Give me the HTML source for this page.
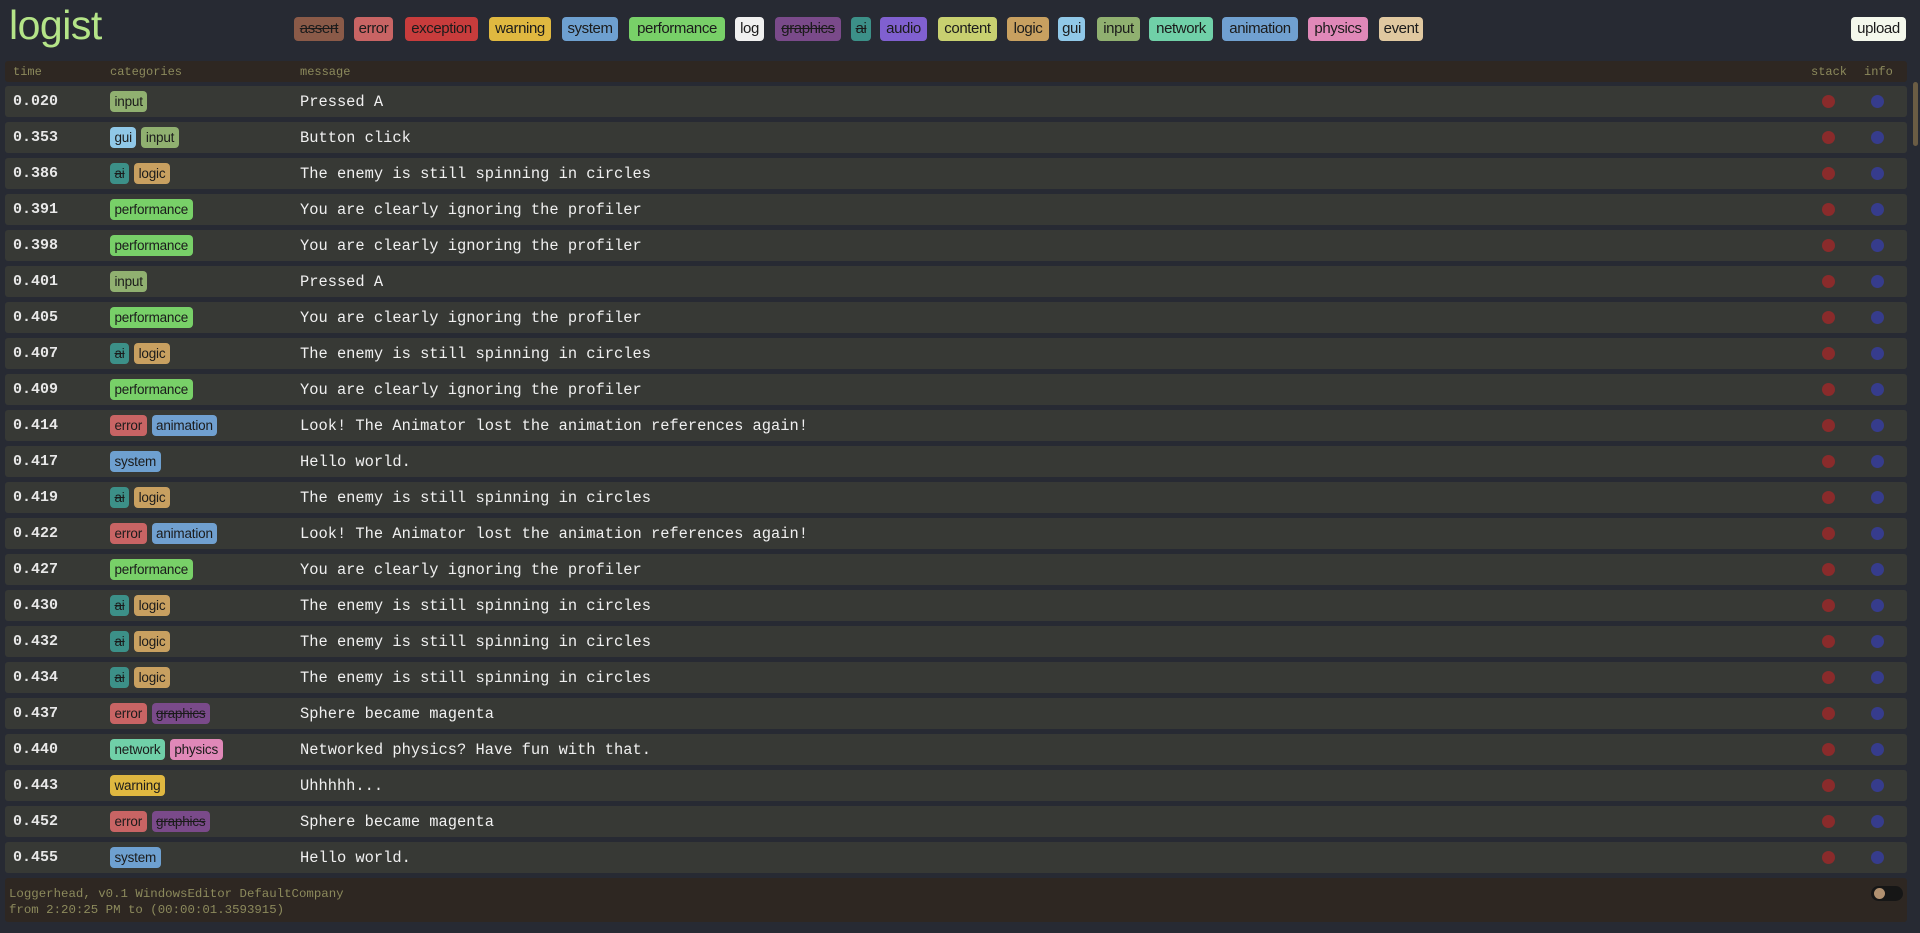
<!DOCTYPE html>
<html><head><meta charset="utf-8"><style>
*{margin:0;padding:0;box-sizing:border-box}
body{width:1920px;height:933px;background:#272a33;position:relative;overflow:hidden;font-family:"Liberation Sans",sans-serif}
.logo{position:absolute;left:9px;top:2px;font-size:41px;color:#b4e488;letter-spacing:-0.5px}
.hc{position:absolute;top:17px;height:24px;border-radius:4px;font-size:15px;line-height:24px;text-align:center;color:#1b1b1b;letter-spacing:-0.4px;white-space:nowrap}
.s{text-decoration:line-through}
.th{position:absolute;left:5px;top:61px;width:1902px;height:21px;background:#2e2722;border-radius:3px;font-family:"Liberation Mono",monospace;font-size:12px;color:#8c8a5c}
.th span{position:absolute;top:4px}
.row{position:absolute;left:5px;width:1902px;height:31px;background:#373935;border-radius:3px}
.t{position:absolute;left:8px;top:7px;font-family:"Liberation Mono",monospace;font-weight:bold;font-size:15px;color:#e8e8e8}
.cats{position:absolute;left:105px;top:5px;display:flex;gap:5px}
.c{height:21px;border-radius:4px;font-size:13.5px;line-height:21px;padding:0 4.5px;color:#1b1b1b;letter-spacing:-0.2px}
.m{position:absolute;left:295px;top:7px;font-family:"Liberation Mono",monospace;font-size:15.4px;color:#f0f0f0}
.d1,.d2{position:absolute;top:9px;width:13px;height:13px;border-radius:50%}
.d1{left:1817px;background:#8a2b2b}
.d2{left:1866px;background:#363c8c}
.foot{position:absolute;left:5px;top:878px;width:1902px;height:44px;background:#2e2722;border-radius:3px;font-family:"Liberation Mono",monospace;font-size:12.4px;color:#8c8a5c;padding:8px 4px;line-height:16px}
.tog{position:absolute;left:1866px;top:8px;width:32px;height:15px;border-radius:8px;background:#161616}
.tog:after{content:"";position:absolute;left:3px;top:2px;width:11px;height:11px;border-radius:50%;background:#b09070}
.sb{position:absolute;left:1913px;top:82px;width:5px;height:64px;background:#6a5c44;border-radius:3px}
</style></head><body>
<div class="logo">logist</div>
<div class="hc s" style="left:294px;width:50px;background:#8a5a48">assert</div>
<div class="hc" style="left:354px;width:39px;background:#c86464">error</div>
<div class="hc" style="left:405px;width:73px;background:#c83c3c">exception</div>
<div class="hc" style="left:489px;width:62px;background:#e0b840">warning</div>
<div class="hc" style="left:562px;width:56px;background:#6ea0d0">system</div>
<div class="hc" style="left:629px;width:96px;background:#78d068">performance</div>
<div class="hc" style="left:735px;width:29px;background:#f0f0f0">log</div>
<div class="hc s" style="left:775px;width:66px;background:#7a4a8a">graphics</div>
<div class="hc s" style="left:851px;width:20px;background:#3c9088">ai</div>
<div class="hc" style="left:880px;width:47px;background:#8060d0">audio</div>
<div class="hc" style="left:938px;width:59px;background:#c8d070">content</div>
<div class="hc" style="left:1007px;width:42px;background:#c8a060">logic</div>
<div class="hc" style="left:1058px;width:27px;background:#90c8e8">gui</div>
<div class="hc" style="left:1097px;width:43px;background:#90b070">input</div>
<div class="hc" style="left:1149px;width:64px;background:#70d0a8">network</div>
<div class="hc" style="left:1222px;width:76px;background:#70a0d0">animation</div>
<div class="hc" style="left:1308px;width:60px;background:#e088b8">physics</div>
<div class="hc" style="left:1379px;width:44px;background:#e0c8a0">event</div>
<div class="hc" style="left:1851px;width:55px;background:#f4f8ec">upload</div>
<div class="th"><span style="left:8px">time</span><span style="left:105px">categories</span><span style="left:295px">message</span><span style="left:1806px">stack</span><span style="left:1859px">info</span></div>
<div class="sb"></div>
<div id="rows"></div>
<div class="foot">Loggerhead, v0.1 WindowsEditor DefaultCompany<br>from 2:20:25 PM to (00:00:01.3593915)<div class="tog"></div></div>
<script>
var C={input:'#90b070',gui:'#90c8e8',ai:'#3c9088',logic:'#c8a060',performance:'#78d068',error:'#c86464',animation:'#70a0d0',system:'#6ea0d0',graphics:'#7a4a8a',network:'#70d0a8',physics:'#e088b8',warning:'#e0b840'};
var S={ai:1,graphics:1};
var P='You are clearly ignoring the profiler',E='The enemy is still spinning in circles',A='Look! The Animator lost the animation references again!';
var R=[['0.020',['input'],'Pressed A'],['0.353',['gui','input'],'Button click'],['0.386',['ai','logic'],E],['0.391',['performance'],P],['0.398',['performance'],P],['0.401',['input'],'Pressed A'],['0.405',['performance'],P],['0.407',['ai','logic'],E],['0.409',['performance'],P],['0.414',['error','animation'],A],['0.417',['system'],'Hello world.'],['0.419',['ai','logic'],E],['0.422',['error','animation'],A],['0.427',['performance'],P],['0.430',['ai','logic'],E],['0.432',['ai','logic'],E],['0.434',['ai','logic'],E],['0.437',['error','graphics'],'Sphere became magenta'],['0.440',['network','physics'],'Networked physics? Have fun with that.'],['0.443',['warning'],'Uhhhhh...'],['0.452',['error','graphics'],'Sphere became magenta'],['0.455',['system'],'Hello world.']];
var h='';R.forEach(function(r,i){h+='<div class="row" style="top:'+(86+i*36)+'px"><span class="t">'+r[0]+'</span><div class="cats">'+r[1].map(function(c){return '<span class="c" style="background:'+C[c]+(S[c]?';text-decoration:line-through':'')+'">'+c+'</span>'}).join('')+'</div><span class="m">'+r[2]+'</span><i class="d1"></i><i class="d2"></i></div>'});
document.getElementById('rows').innerHTML=h;
</script>
</body></html>
